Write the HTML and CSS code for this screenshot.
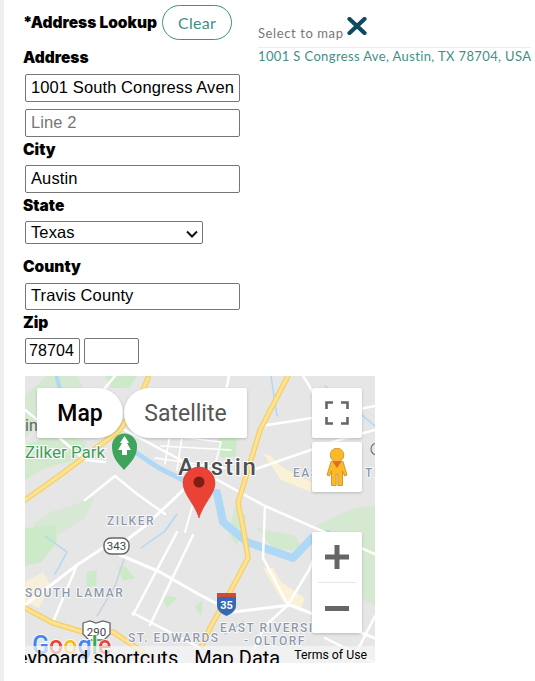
FILE: index.html

```html
<!DOCTYPE html>
<html lang="en">
<head>
  <meta charset="UTF-8">
  <title>Address Lookup</title>
  <link rel="stylesheet" href="styles.css">
</head>
<body>
  <div class="page">
    <form class="address-form">
      <div class="lookup-head">
        <span class="lookup-title">*Address Lookup</span>
        <button type="button" class="clear-btn">Clear</button>
      </div>

      <label class="field-label first">Address</label>
      <input class="text-input" type="text" value="1001 South Congress Avenue">
      <input class="text-input line-two" type="text" placeholder="Line 2">

      <label class="field-label">City</label>
      <input class="text-input" type="text" value="Austin">

      <label class="field-label">State</label>
      <select class="state-select">
        <option>Texas</option>
      </select>

      <label class="field-label county">County</label>
      <input class="text-input short" type="text" value="Travis County">

      <label class="field-label">Zip</label>
      <div class="zip-row">
        <input class="zip-input" type="text" value="78704">
        <input class="zip-input" type="text">
      </div>

      <div class="map">
        <svg class="map-art" viewBox="0 0 350 287" width="350" height="287">
          <rect width="350" height="287" fill="#e6e6e6"/>
          <!-- parks -->
          <g fill="#cdeac8">
            <path d="M0 20 L22 0 H52 L60 14 L40 44 L12 50 L0 62Z" opacity=".7"/>
            <path d="M0 70 L30 56 L62 66 L50 84 L20 92 L0 104Z" opacity=".8"/>
            <path d="M8 148 L26 136 L52 128 L70 120 L60 142 L34 158 L14 166Z" opacity=".6"/>
            <path d="M0 152 L30 149 L32 166 L16 186 L0 190Z"/>
            <path d="M62 196 L72 194 L71 210 L61 211Z"/>
            <path d="M93 191 L100 190 L110 202 L98 205Z"/>
            <path d="M136 218 L152 222 L142 232Z"/>
            <path d="M170 230 L178 224 L176 240Z"/>
            <path d="M193 62 L212 58 L211 80 L196 82Z"/>
            <path d="M209 132 L222 140 L212 170 L204 158Z" opacity=".8"/>
            <path d="M290 150 L330 132 L350 130 V230 L336 222 L318 180Z" opacity=".75"/>
            <path d="M232 152 L270 160 L280 176 L248 172Z" opacity=".8"/>
            <path d="M120 26 L160 30 L150 50 L128 44Z" opacity=".6"/>
            <path d="M80 0 H112 L104 12 L86 12Z"/>
          </g>
          <!-- yellow blocks -->
          <g fill="#fbf1d6">
            <path d="M0 206 L18 196 L26 210 L14 232 L0 226Z" opacity=".8"/>
            <path d="M238 192 L248 192 L256 206 L280 222 L276 232 L258 226Z"/>
            <path d="M238 77 L246 80 L258 92 L286 106 L286 116 L256 104Z"/>
          </g>
          <!-- water -->
          <g fill="none" stroke="#aed8f5" stroke-linecap="round" stroke-linejoin="round">
            <path d="M110 76 L134 92 L158 104 L176 110 L192 117" stroke-width="5"/>
            <path d="M192 117 L198 146 L222 166 L268 182 L287 162 L302 158" stroke-width="8"/>
            <path d="M32 2 L36 18 L48 24" stroke-width="4"/>
            <path d="M200 258 L218 246" stroke-width="2"/>
            <path d="M246 0 L252 40" stroke-width="1.500"/>
            <path d="M20 160 L42 176 L30 198" stroke-width="1.500"/>
            <path d="M100 180 L90 210 L72 240" stroke="#c6d4e2" stroke-width="1.500"/>
            <path d="M300 10 L326 30 L350 50" stroke-width="1.500"/>
            <path d="M116 172 L140 155 L152 138" stroke-width="1.500"/>
          </g>
          <!-- white streets -->
          <g fill="none" stroke="#fff" stroke-width="2.500" stroke-linecap="round" stroke-linejoin="round">
            <path d="M0 229 L52 189 L78 172 L91 172 L120 150 L150 122 L172 100" stroke-width="3"/>
            <path d="M95 179 L135 196 L175 219 L208 236 L265 229 L350 262" stroke-width="3"/>
            <path d="M28 246 L52 189"/>
            <path d="M108 239 L152 156"/>
            <path d="M125 249 L168 159"/>
            <path d="M108 237 L175 272"/>
            <path d="M238 182 L263 229 L285 192 L292 172"/>
            <path d="M263 229 L240 250 L222 287"/>
            <path d="M22 48 L70 24 L90 0"/>
            <path d="M70 24 L100 54 L178 96 L240 130 L350 178"/>
            <path d="M236 50 L300 40 L350 30"/>
            <path d="M222 96 L320 62 L350 54"/>
            <path d="M300 40 L282 6 L278 0"/>
            <path d="M240 130 L238 182"/>
            <path d="M326 287 L350 240"/>
            <path d="M300 262 L350 287"/>
            <path d="M176 100 L160 156" stroke-width="2"/>
            <path d="M148 60 L196 66 L186 104 M136 70 L206 74 M130 82 L200 92 M146 52 L140 88 M158 54 L152 94" stroke-width="1.600"/>
            <path d="M204 0 L198 30 L214 32"/>
            <path d="M0 34 L30 58 L60 84 L80 86"/>
            <path d="M60 124 L90 100 L112 118 L140 138"/>
          </g>
          <!-- highways -->
          <g fill="none" stroke-linecap="round" stroke-linejoin="round">
            <path d="M0 124 L38 97 L95 54 L112 28 L123 2" stroke="#f3d067" stroke-width="5.500"/>
            <path d="M0 124 L38 97 L95 54 L112 28 L123 2" stroke="#fde293" stroke-width="3"/>
            <path d="M263 0 L235 54 L213 127 L218 151 L223 182 L205 216 L185 252 L177 269" stroke="#f3d067" stroke-width="5.500"/>
            <path d="M263 0 L235 54 L213 127 L218 151 L223 182 L205 216 L185 252 L177 269" stroke="#fde293" stroke-width="3"/>
            <path d="M0 232 L28 247 L58 256 L88 256 L118 276" stroke="#f3d067" stroke-width="5.500"/>
            <path d="M0 232 L28 247 L58 256 L88 256 L118 276" stroke="#fde293" stroke-width="3"/>
          </g>
          <!-- labels -->
          <text class="map-label city" x="153" y="99">Austin</text>
          <text class="map-label park" x="0" y="82">Zilker Park</text>
          <text class="map-label stub" x="0" y="55">in</text>
          <text class="map-label area" x="82" y="149">ZILKER</text>
          <text class="map-label area" x="0" y="221">SOUTH LAMAR</text>
          <text class="map-label area" x="103" y="266">ST. EDWARDS</text>
          <text class="map-label area" x="195" y="256">EAST RIVERSIDE</text>
          <text class="map-label area" x="219" y="269">- OLTORF</text>
          <text class="map-label area" x="268" y="101">EAST</text>
          <text class="map-label area" x="340" y="101">TI</text>
          <circle cx="352" cy="73" r="6" fill="none" stroke="#777" stroke-width="1.200"/>
          <!-- highway shields -->
          <rect x="79" y="162" width="25" height="16" rx="7" fill="#fff" stroke="#666" stroke-width="1.500"/>
          <text class="shield-num" x="91.500" y="174">343</text>
          <path d="M58 247 L65 245 L71 247 L78 245 L85 247 V258 L79 264 H64 L58 258Z" fill="#fff" stroke="#666" stroke-width="1.300"/>
          <text class="shield-num" x="71.500" y="260">290</text>
          <path d="M192 217 H211 V229 C211 236 205 238 201.500 240 C198 238 192 236 192 229Z" fill="#3569b5"/>
          <path d="M192 217 H211 V221 H192Z" fill="#cc4b3a"/>
          <text class="shield-small" x="201.500" y="233">35</text>
          <!-- park pin -->
          <path d="M99 94 C90 84 87 80 87 70 A12.500 12.500 0 0 1 112 70 C112 80 108 84 99 94Z" fill="#3fa35c"/>
          <path d="M99.500 60 L104 67 H102 L106 74 H102 V79 H97 V74 H93 L97 67 H95Z" fill="#fff"/>
          <!-- location pin -->
          <path d="M174 142 C170 128 158 118 158 107 A16 16 0 0 1 190 107 C190 118 178 128 174 142Z" fill="#ea4335" stroke="#d23a2d" stroke-width=".6"/>
          <circle cx="174" cy="106" r="5.500" fill="#7e1d16"/>
          <!-- logo -->
          <text class="google-logo" x="7" y="278"><tspan fill="#4285f4">G</tspan><tspan fill="#ea4335">o</tspan><tspan fill="#fbbc05">o</tspan><tspan fill="#4285f4">g</tspan><tspan fill="#34a853">l</tspan><tspan fill="#ea4335">e</tspan></text>
        </svg>

        <div class="map-type">
          <button type="button" class="type-btn active">Map</button>
          <button type="button" class="type-btn">Satellite</button>
        </div>

        <button type="button" class="ctl fullscreen" aria-label="Fullscreen">
          <svg viewBox="0 0 24 24" width="24" height="24" fill="none" stroke="#666" stroke-width="2.600">
            <path d="M1.500 8V1.500H8M16 1.500H22.500V8M22.500 16V22.500H16M8 22.500H1.500V16"/>
          </svg>
        </button>

        <button type="button" class="ctl pegman" aria-label="Street View">
          <svg viewBox="0 0 22 38" width="22" height="38">
            <circle cx="11" cy="7" r="6.800" fill="#fbb829" stroke="#c98a1c" stroke-width=".8"/>
            <path d="M5 13.500 H17 L21 27 L18.500 28 L16.500 23 V37.500 H11.800 V26 H10.200 V37.500 H5.500 V23 L3.500 28 L1 27Z" fill="#fbb829" stroke="#c98a1c" stroke-width=".8"/>
            <path d="M6.500 13.500 H15.500 L11 20Z" fill="#dd6d28"/>
          </svg>
        </button>

        <div class="zoom-box">
          <button type="button" class="zoom-btn" aria-label="Zoom in">
            <svg viewBox="0 0 24 24" width="24" height="24" fill="#666"><path d="M9.500 0h5v9.500H24v5h-9.500V24h-5v-9.500H0v-5h9.500z"/></svg>
          </button>
          <div class="zoom-line"></div>
          <button type="button" class="zoom-btn" aria-label="Zoom out">
            <svg viewBox="0 0 24 24" width="24" height="24" fill="#666"><path d="M0 10h24v5H0z"/></svg>
          </button>
        </div>

        <div class="map-foot">
          <span class="foot-link">Keyboard shortcuts</span>
          <span class="foot-link">Map Data</span>
          <span class="foot-terms">Terms of Use</span>
        </div>
      </div>
    </form>

    <aside class="results">
      <div class="results-head">
        <span class="results-title">Select to map</span>
        <svg class="close-x" viewBox="0 0 20 18" width="20" height="18">
          <path d="M2.500 2 L17.500 16 M17.500 2 L2.500 16" stroke="#0f4a5f" stroke-width="4.200" stroke-linecap="round"/>
        </svg>
      </div>
      <div class="result-row">1001 S Congress Ave, Austin, TX 78704, USA</div>
    </aside>
  </div>
</body>
</html>
```

FILE: styles.css

```css
html, body {
  margin: 0;
  padding: 0;
  background: #fff;
}
body {
  height: 681px;
  overflow: hidden;
  border-left: 4px solid #efefef;
  font-family: "Liberation Sans", Arial, sans-serif;
  color: #000;
}
.page {
  display: flex;
  align-items: flex-start;
}
.address-form {
  width: 235px;
  padding: 5px 0 0 19px;
  flex: none;
}

.lookup-head {
  display: flex;
  align-items: center;
  gap: 5px;
  height: 35px;
  white-space: nowrap;
}
.lookup-title, .field-label {
  font-family: Inter, "Liberation Sans", sans-serif;
  font-weight: 900;
  font-size: 15.500px;
  line-height: 18px;
}
.clear-btn {
  flex: none;
  width: 70px;
  height: 35px;
  padding: 0;
  border: 1px solid #3f8f87;
  border-radius: 18px;
  background: #fff;
  color: #3f8f87;
  font-family: Lato, sans-serif;
  font-size: 16px;
  letter-spacing: 0.3px;
}

.field-label {
  display: block;
  margin: 4px 0 6px;
}
.field-label.first {
  margin-top: 9px;
  margin-bottom: 7px;
}
.field-label.county {
  margin-top: 14px;
  margin-bottom: 7px;
}
.text-input, .state-select, .zip-input {
  display: block;
  box-sizing: border-box;
  margin-left: 2px;
  border: 1px solid #767676;
  border-radius: 2px;
  background-color: #fff;
  color: #000;
  font-family: "Liberation Sans", Arial, sans-serif;
  font-size: 16.500px;
  letter-spacing: 0.1px;
}
.text-input {
  width: 215px;
  height: 28px;
  padding: 0 5px 2px;
}
.text-input.line-two {
  margin-top: 7px;
}
.text-input.short {
  height: 27px;
}
.text-input::placeholder {
  color: #757575;
  opacity: 1;
}
.state-select {
  width: 178px;
  height: 23px;
  padding: 0 0 2px 5px;
  appearance: none;
  background-image: url("data:image/svg+xml,%3Csvg xmlns='http://www.w3.org/2000/svg' width='12' height='8'%3E%3Cpath d='M1 1.500l5 5 5-5' fill='none' stroke='%23111' stroke-width='2'/%3E%3C/svg%3E");
  background-repeat: no-repeat;
  background-position: 160px 8px;
}
.zip-row {
  display: flex;
  gap: 4px;
  margin-left: 2px;
}
.zip-input {
  width: 55px;
  height: 26px;
  margin: 0;
  padding: 0 3px;
  font-size: 16px;
}

.map {
  position: relative;
  width: 350px;
  height: 287px;
  margin: 12px 0 0 2px;
  overflow: hidden;
}
.map-art {
  display: block;
}
.map-label {
  font-family: Roboto, sans-serif;
}
.map-label.city {
  font-size: 24px;
  font-weight: 500;
  letter-spacing: 1.800px;
  fill: #4d4f53;
  stroke: #fff;
  stroke-width: 2px;
  paint-order: stroke;
}
.map-label.park {
  font-size: 17px;
  fill: #3f9c5b;
  stroke: #fff;
  stroke-width: 2px;
  paint-order: stroke;
}
.map-label.stub {
  font-size: 16px;
  fill: #5f6368;
}
.map-label.area {
  font-size: 12px;
  font-weight: 500;
  letter-spacing: 1.500px;
  fill: #8e98ab;
  stroke: #fff;
  stroke-width: 1.500px;
  paint-order: stroke;
}
.shield-num {
  font-family: Roboto, sans-serif;
  font-size: 11.500px;
  text-anchor: middle;
  fill: #444;
}
.shield-small {
  font-family: Roboto, sans-serif;
  font-size: 11px;
  font-weight: 700;
  text-anchor: middle;
  fill: #fff;
}
.google-logo {
  font-family: Roboto, sans-serif;
  font-size: 25px;
  font-weight: 500;
  stroke: #fff;
  stroke-width: 1.500px;
  paint-order: stroke;
}

.map-type {
  position: absolute;
  top: 12px;
  left: 12px;
  display: flex;
  height: 50px;
}
.type-btn {
  height: 50px;
  padding: 0;
  border: 0;
  background: #fff;
  color: #565656;
  font-family: Roboto, sans-serif;
  font-size: 23px;
  box-shadow: 0 1px 3px rgba(0,0,0,0.2);
}
.type-btn.active {
  width: 86px;
  margin-right: 1px;
  border-radius: 2px 25px 25px 2px;
  color: #000;
  font-weight: 500;
}
.type-btn:not(.active) {
  width: 123px;
  border-radius: 25px 2px 2px 25px;
}
.ctl, .zoom-box {
  position: absolute;
  left: 287px;
  width: 50px;
  background: #fff;
  border-radius: 2px;
  box-shadow: 0 1px 3px rgba(0,0,0,0.2);
}
.ctl {
  display: flex;
  align-items: center;
  justify-content: center;
  height: 50px;
  padding: 0;
  border: 0;
}
.fullscreen {
  top: 12px;
}
.pegman {
  top: 66px;
}
.zoom-box {
  top: 156px;
  height: 101px;
}
.zoom-btn {
  display: flex;
  align-items: center;
  justify-content: center;
  width: 50px;
  height: 50px;
  padding: 0;
  border: 0;
  background: transparent;
}
.zoom-line {
  height: 1px;
  margin: 0 6px;
  background: #e6e6e6;
}

.map-foot {
  position: absolute;
  right: 0;
  bottom: 0;
  display: flex;
  align-items: flex-start;
  height: 17px;
  white-space: nowrap;
  background: rgba(245,245,245,0.7);
}
.foot-link {
  padding: 0 8px;
  font-family: Roboto, sans-serif;
  font-size: 20px;
  line-height: 24px;
  color: #000;
}
.foot-terms {
  padding: 0 8px 0 6px;
  font-family: Roboto, sans-serif;
  font-size: 12.300px;
  line-height: 19px;
  color: #000;
}

.results {
  width: 273px;
  margin-top: 16px;
  flex: none;
}
.results-head {
  display: flex;
  align-items: flex-end;
  gap: 3px;
  height: 30px;
  padding-bottom: 1px;
  border-bottom: 1px solid #ebebeb;
}
.results-title {
  margin-bottom: 4px;
  font-family: Lato, sans-serif;
  font-size: 13px;
  line-height: 17px;
  letter-spacing: 0.6px;
  color: #777;
}
.close-x {
  margin-bottom: 11px;
}
.result-row {
  font-family: Lato, sans-serif;
  font-size: 13px;
  line-height: 17px;
  letter-spacing: 0.37px;
  color: #3f8f87;
  white-space: nowrap;
}
```
